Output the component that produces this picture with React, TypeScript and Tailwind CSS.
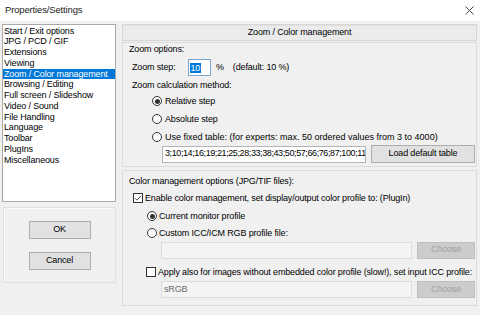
import type { ReactNode } from 'react'

const pages = [
  'Start / Exit options',
  'JPG / PCD / GIF',
  'Extensions',
  'Viewing',
  'Zoom / Color management',
  'Browsing / Editing',
  'Full screen / Slideshow',
  'Video / Sound',
  'File Handling',
  'Language',
  'Toolbar',
  'PlugIns',
  'Miscellaneous',
]

function Radio({ checked = false }: { checked?: boolean }) {
  return (
    <span className="w-[10px] h-[10px] rounded-full border border-[#333] bg-white flex items-center justify-center shrink-0">
      {checked && <span className="w-[5px] h-[5px] rounded-full bg-[#333]" />}
    </span>
  )
}

function Check({ checked = false }: { checked?: boolean }) {
  return (
    <span className="w-[10px] h-[10px] border border-[#333] bg-white flex items-center justify-center shrink-0">
      {checked && (
        <svg width="8" height="8" viewBox="0 0 8 8">
          <path d="M1 4.2 L3 6.2 L7 1.8" fill="none" stroke="#333" strokeWidth="0.9" />
        </svg>
      )}
    </span>
  )
}

function Row({ children, className = '' }: { children: ReactNode; className?: string }) {
  return <div className={`h-[11px] leading-[11px] flex items-center whitespace-nowrap ${className}`}>{children}</div>
}

function Button({ children, className = '' }: { children: ReactNode; className?: string }) {
  return (
    <div className={`h-[18px] flex items-center justify-center border bg-[#e1e1e1] border-[#adadad] ${className}`}>
      {children}
    </div>
  )
}

function DisabledButton() {
  return (
    <div className="w-[58px] h-[17px] flex items-center justify-center bg-[#cccccc] border border-[#bfbfbf] text-[#a0a0a0]">
      Choose
    </div>
  )
}

export default function App() {
  return (
    <div className="w-[480px] h-[315px] bg-[#f0f0f0] flex flex-col overflow-hidden text-[9px] tracking-[-0.15px] text-black font-['Liberation_Sans',Arial,sans-serif]">
      {/* title bar */}
      <div className="h-[21px] bg-white flex items-center justify-between pl-[5px] pr-[6px] shrink-0">
        <span className="text-[9.5px] text-[#222]">Properties/Settings</span>
        <svg width="9" height="9" viewBox="0 0 9 9">
          <path d="M0.5 0.5 L8.5 8.5 M8.5 0.5 L0.5 8.5" stroke="#333" strokeWidth="0.9" />
        </svg>
      </div>

      <div className="flex pt-[3px] pl-[2px] pr-[3px] gap-[6px]">
        {/* left column: page list + buttons */}
        <div className="w-[115px] flex flex-col">
          <div className="h-[178px] border border-[#a9a9a9] bg-white pt-[0.5px]">
            {pages.map((p) => (
              <div
                key={p}
                className={`h-[10.75px] leading-[10.75px] pl-[1px] whitespace-nowrap ${
                  p === 'Zoom / Color management' ? 'bg-[#0078d7] text-white' : ''
                }`}
              >
                {p}
              </div>
            ))}
          </div>
          <div className="mt-[5px] ml-[1px] h-[76px] border border-[#e0e0e0] shadow-[inset_1px_1px_0_#fafafa] flex flex-col items-center pt-[13px] gap-[13px]">
            <Button className="w-[62px] border-[#0078d7]">OK</Button>
            <Button className="w-[62px]">Cancel</Button>
          </div>
        </div>

        {/* right column */}
        <div className="flex-1 flex flex-col">
          <div className="h-[17px] border border-[#d6d6d6] bg-[#ebebeb] shadow-[inset_0_1px_0_#e0e0e0] flex items-center justify-center">
            Zoom / Color management
          </div>

          {/* zoom options */}
          <div className="mt-[1px] h-[125px] border border-[#dcdcdc] pl-[6px] pr-[1px] pt-[1px]">
            <Row>Zoom options:</Row>
            <div className="mt-[4px] h-[17px] flex items-center pl-[3px]">
              <span className="w-[56px]">Zoom step:</span>
              <div className="w-[23px] h-[17px] bg-white border border-[#7aa3cf] flex items-center pl-[1px]">
                <span className="bg-[#0078d7] text-white leading-[10px] px-[0.5px]">10</span>
              </div>
              <span className="ml-[5px]">%</span>
              <span className="ml-[9px]">(default: 10 %)</span>
            </div>
            <Row className="mt-[3.5px] pl-[3px]">Zoom calculation method:</Row>
            <Row className="mt-[5px] pl-[23px] gap-[3px]">
              <Radio checked />
              <span>Relative step</span>
            </Row>
            <Row className="mt-[7px] pl-[23px] gap-[3px]">
              <Radio />
              <span>Absolute step</span>
            </Row>
            <Row className="mt-[7px] pl-[23px] gap-[3px]">
              <Radio />
              <span className="tracking-[0px]">Use fixed table: (for experts: max. 50 ordered values from 3 to 4000)</span>
            </Row>
            <div className="mt-[2.5px] flex items-center gap-[5px] pl-[33px]">
              <div className="w-[204px] h-[17px] bg-white border border-[#b5b5b5] flex items-center pl-[2px] overflow-hidden whitespace-nowrap tracking-[-0.4px]">
                3;10;14;16;19;21;25;28;33;38;43;50;57;66;76;87;100;11
              </div>
              <Button className="w-[104px] h-[18px]">Load default table</Button>
            </div>
          </div>

          {/* color management */}
          <div className="mt-[3px] h-[136px] border border-[#dcdcdc] pl-[6px] pr-[1px] pt-[4.5px]">
            <Row>Color management options (JPG/TIF files):</Row>
            <Row className="mt-[6px] pl-[4px] gap-[2px]">
              <Check checked />
              <span>Enable color management, set display/output color profile to: (PlugIn)</span>
            </Row>
            <Row className="mt-[7px] pl-[18px] gap-[2px]">
              <Radio checked />
              <span>Current monitor profile</span>
            </Row>
            <Row className="mt-[6px] pl-[18px] gap-[2px]">
              <Radio />
              <span>Custom ICC/ICM RGB profile file:</span>
            </Row>
            <div className="mt-[3px] flex items-center gap-[5px] pl-[32px]">
              <div className="w-[251px] h-[17px] bg-[#f4f4f4] border border-[#dcdcdc]" />
              <DisabledButton />
            </div>
            <Row className="mt-[8px] pl-[17px] gap-[2px]">
              <Check />
              <span>Apply also for images without embedded color profile (slow!), set input ICC profile:</span>
            </Row>
            <div className="mt-[3.5px] flex items-center gap-[5px] pl-[32px]">
              <div className="w-[251px] h-[17px] bg-[#f4f4f4] border border-[#dcdcdc] flex items-center pl-[2px] text-[#6d6d6d]">
                sRGB
              </div>
              <DisabledButton />
            </div>
          </div>
        </div>
      </div>
    </div>
  )
}
